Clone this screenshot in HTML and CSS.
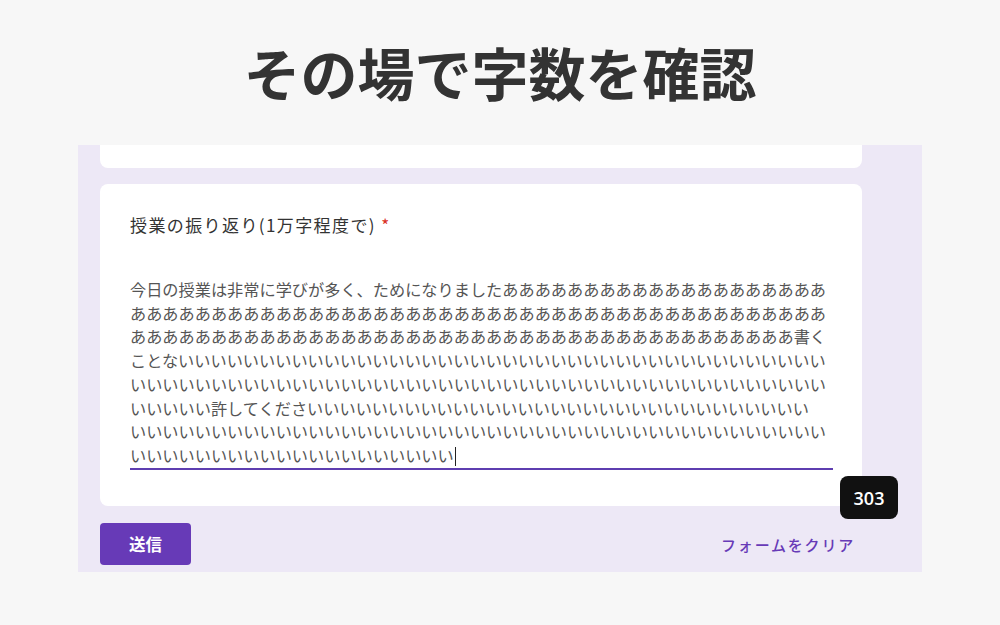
FILE: index.html
```html
<!DOCTYPE html>
<html lang="ja">
<head>
<meta charset="utf-8">
<title>その場で字数を確認</title>
<link rel="stylesheet" href="styles.css">
</head>
<body>
<header class="hero">
  <h1 class="hero-title">その場で字数を確認</h1>
</header>
<main class="panel">
  <div class="card card-top"></div>
  <section class="card card-question">
    <div class="q-label">授業の振り返り(1万字程度で)<span class="req"> *</span></div>
    <div class="answer">
      <div class="answer-text">今日の授業は非常に学びが多く、ためになりましたああああああああああああああああああああ<br>あああああああああああああああああああああああああああああああああああああああああああ<br>あああああああああああああああああああああああああああああああああああああああああ書く<br>ことないいいいいいいいいいいいいいいいいいいいいいいいいいいいいいいいいいいいいいいい<br>いいいいいいいいいいいいいいいいいいいいいいいいいいいいいいいいいいいいいいいいいいい<br>いいいいい許してくださいいいいいいいいいいいいいいいいいいいいいいいいいいいいいいい<br>いいいいいいいいいいいいいいいいいいいいいいいいいいいいいいいいいいいいいいいいいいい<br>いいいいいいいいいいいいいいいいいいいい<span class="caret"></span></div>
    </div>
    <div class="counter">303</div>
  </section>
  <div class="actions">
    <button class="btn-submit" type="button">送信</button>
    <a class="btn-clear" href="#">フォームをクリア</a>
  </div>
</main>
</body>
</html>
```
FILE: styles.css
```css
* { box-sizing: border-box; }
html, body { margin: 0; padding: 0; }
body {
  background: #f7f7f7;
  font-family: "Noto Sans CJK JP", "Noto Sans", sans-serif;
  width: 1000px;
  height: 625px;
  overflow: hidden;
}
.hero {
  height: 145px;
  display: flex;
  align-items: center;
  justify-content: center;
  padding-bottom: 3px;
}
.hero-title {
  margin: 0;
  font-size: 57px;
  font-weight: 700;
  color: #333333;
  line-height: 1;
  letter-spacing: 0;
}
.panel {
  width: 844px;
  margin: 0 auto;
  background: #ede8f6;
  padding: 0 60px 7px 22px;
  display: flex;
  flex-direction: column;
}
.card {
  background: #ffffff;
  border-radius: 8px;
}
.card-top {
  height: 23px;
  border-top-left-radius: 0;
  border-top-right-radius: 0;
}
.card-question {
  position: relative;
  margin-top: 16px;
  height: 322px;
  padding: 29px 29px 0 30px;
}
.q-label {
  font-size: 17px;
  line-height: 24px;
  color: #333333;
  letter-spacing: 1.4px;
}
.req { color: #d93025; }
.answer {
  margin-top: 41px;
  border-bottom: 2px solid #5e3eb0;
  width: 703px;
}
.answer-text {
  font-size: 16.2px;
  line-height: 23.7px;
  color: #555555;
  white-space: nowrap;
  overflow: hidden;
}
.caret {
  display: inline-block;
  width: 1.5px;
  height: 19px;
  background: #222;
  vertical-align: -4px;
  margin-left: 1px;
}
.counter {
  position: absolute;
  right: -36px;
  bottom: -13px;
  width: 58px;
  height: 43px;
  background: #111111;
  color: #ffffff;
  border-radius: 8px;
  font-family: "Open Sans", "Noto Sans", sans-serif;
  font-size: 18px;
  font-weight: 600;
  display: flex;
  align-items: center;
  justify-content: center;
}
.actions {
  margin-top: 17px;
  display: flex;
  justify-content: space-between;
  align-items: center;
  padding-right: 7px;
}
.btn-submit {
  width: 91px;
  height: 42px;
  background: #673ab7;
  color: #ffffff;
  border: none;
  border-radius: 4px;
  font-family: "Noto Sans CJK JP", sans-serif;
  font-size: 16.5px;
  font-weight: 700;
  padding: 0;
}
.btn-clear {
  color: #673ab7;
  text-decoration: none;
  font-size: 15px;
  font-weight: 500;
  letter-spacing: 1.8px;
}
```
